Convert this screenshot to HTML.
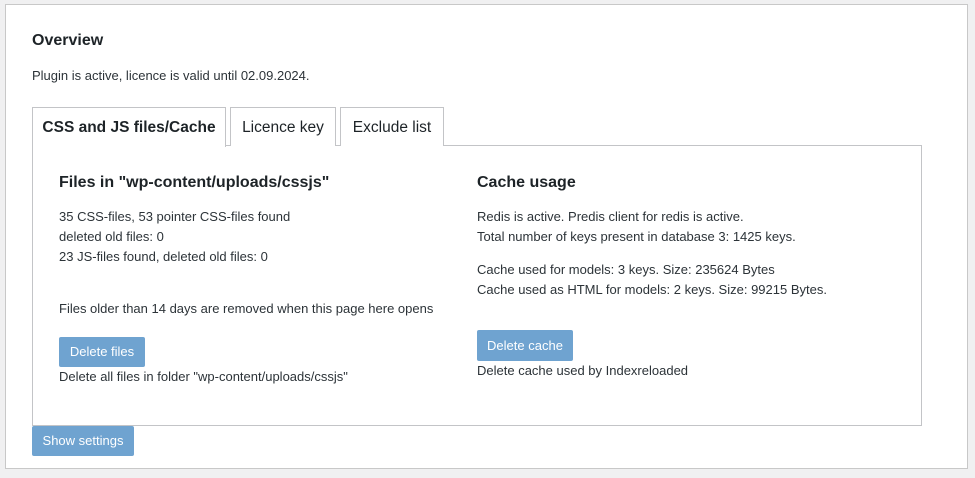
<!DOCTYPE html>
<html><head><style>
body{margin:0;width:975px;height:478px;background:#f0f0f1;font-family:"Liberation Sans",sans-serif;color:#2c3338;position:relative;overflow:hidden}
.panel{position:absolute;left:5px;top:4px;width:963px;height:465px;background:#fff;border:1px solid #c8c8c8;box-sizing:border-box}
.a{position:absolute;white-space:nowrap}
.t{position:absolute;top:107px;height:39px;border:1px solid #c3c4c7;border-bottom:none;box-sizing:border-box;background:#fff;font-size:15.5px;line-height:40px;text-align:center;color:#1d2327}
.box{position:absolute;left:32px;top:145px;width:890px;height:281px;border:1px solid #c3c4c7;box-sizing:border-box}
.btn{position:absolute;background:#6fa3d0;color:#fff;border-radius:2px;font-size:13px;text-align:center}
.s{font-size:13px;line-height:20px}
h3{margin:0;font-size:16px;font-weight:bold;color:#1d2327}
</style></head><body>
<div class="panel"></div>
<div class="a" style="left:32px;top:32px;font-size:16px;font-weight:bold;color:#1d2327">Overview</div>
<div class="a s" style="left:32px;top:66px">Plugin is active, licence is valid until 02.09.2024.</div>
<div class="box"></div>
<div class="t" style="left:32px;width:194px;font-weight:bold;height:40px;z-index:2">CSS and JS files/Cache</div>
<div class="t" style="left:230px;width:106px">Licence key</div>
<div class="t" style="left:340px;width:104px">Exclude list</div>
<div class="a" style="left:59px;top:174px"><h3>Files in "wp-content/uploads/cssjs"</h3></div>
<div class="a s" style="left:59px;top:207px">35 CSS-files, 53 pointer CSS-files found<br>deleted old files: 0<br>23 JS-files found, deleted old files: 0</div>
<div class="a s" style="left:59px;top:299px">Files older than 14 days are removed when this page here opens</div>
<div class="btn" style="left:59px;top:337px;width:86px;height:30px;line-height:30px">Delete files</div>
<div class="a s" style="left:59px;top:367px">Delete all files in folder "wp-content/uploads/cssjs"</div>
<div class="a" style="left:477px;top:174px"><h3>Cache usage</h3></div>
<div class="a s" style="left:477px;top:207px">Redis is active. Predis client for redis is active.<br>Total number of keys present in database 3: 1425 keys.</div>
<div class="a s" style="left:477px;top:260px">Cache used for models: 3 keys. Size: 235624 Bytes<br>Cache used as HTML for models: 2 keys. Size: 99215 Bytes.</div>
<div class="btn" style="left:477px;top:330px;width:96px;height:31px;line-height:31px">Delete cache</div>
<div class="a s" style="left:477px;top:361px">Delete cache used by Indexreloaded</div>
<div class="btn" style="left:32px;top:426px;width:102px;height:30px;line-height:30px">Show settings</div>
</body></html>
